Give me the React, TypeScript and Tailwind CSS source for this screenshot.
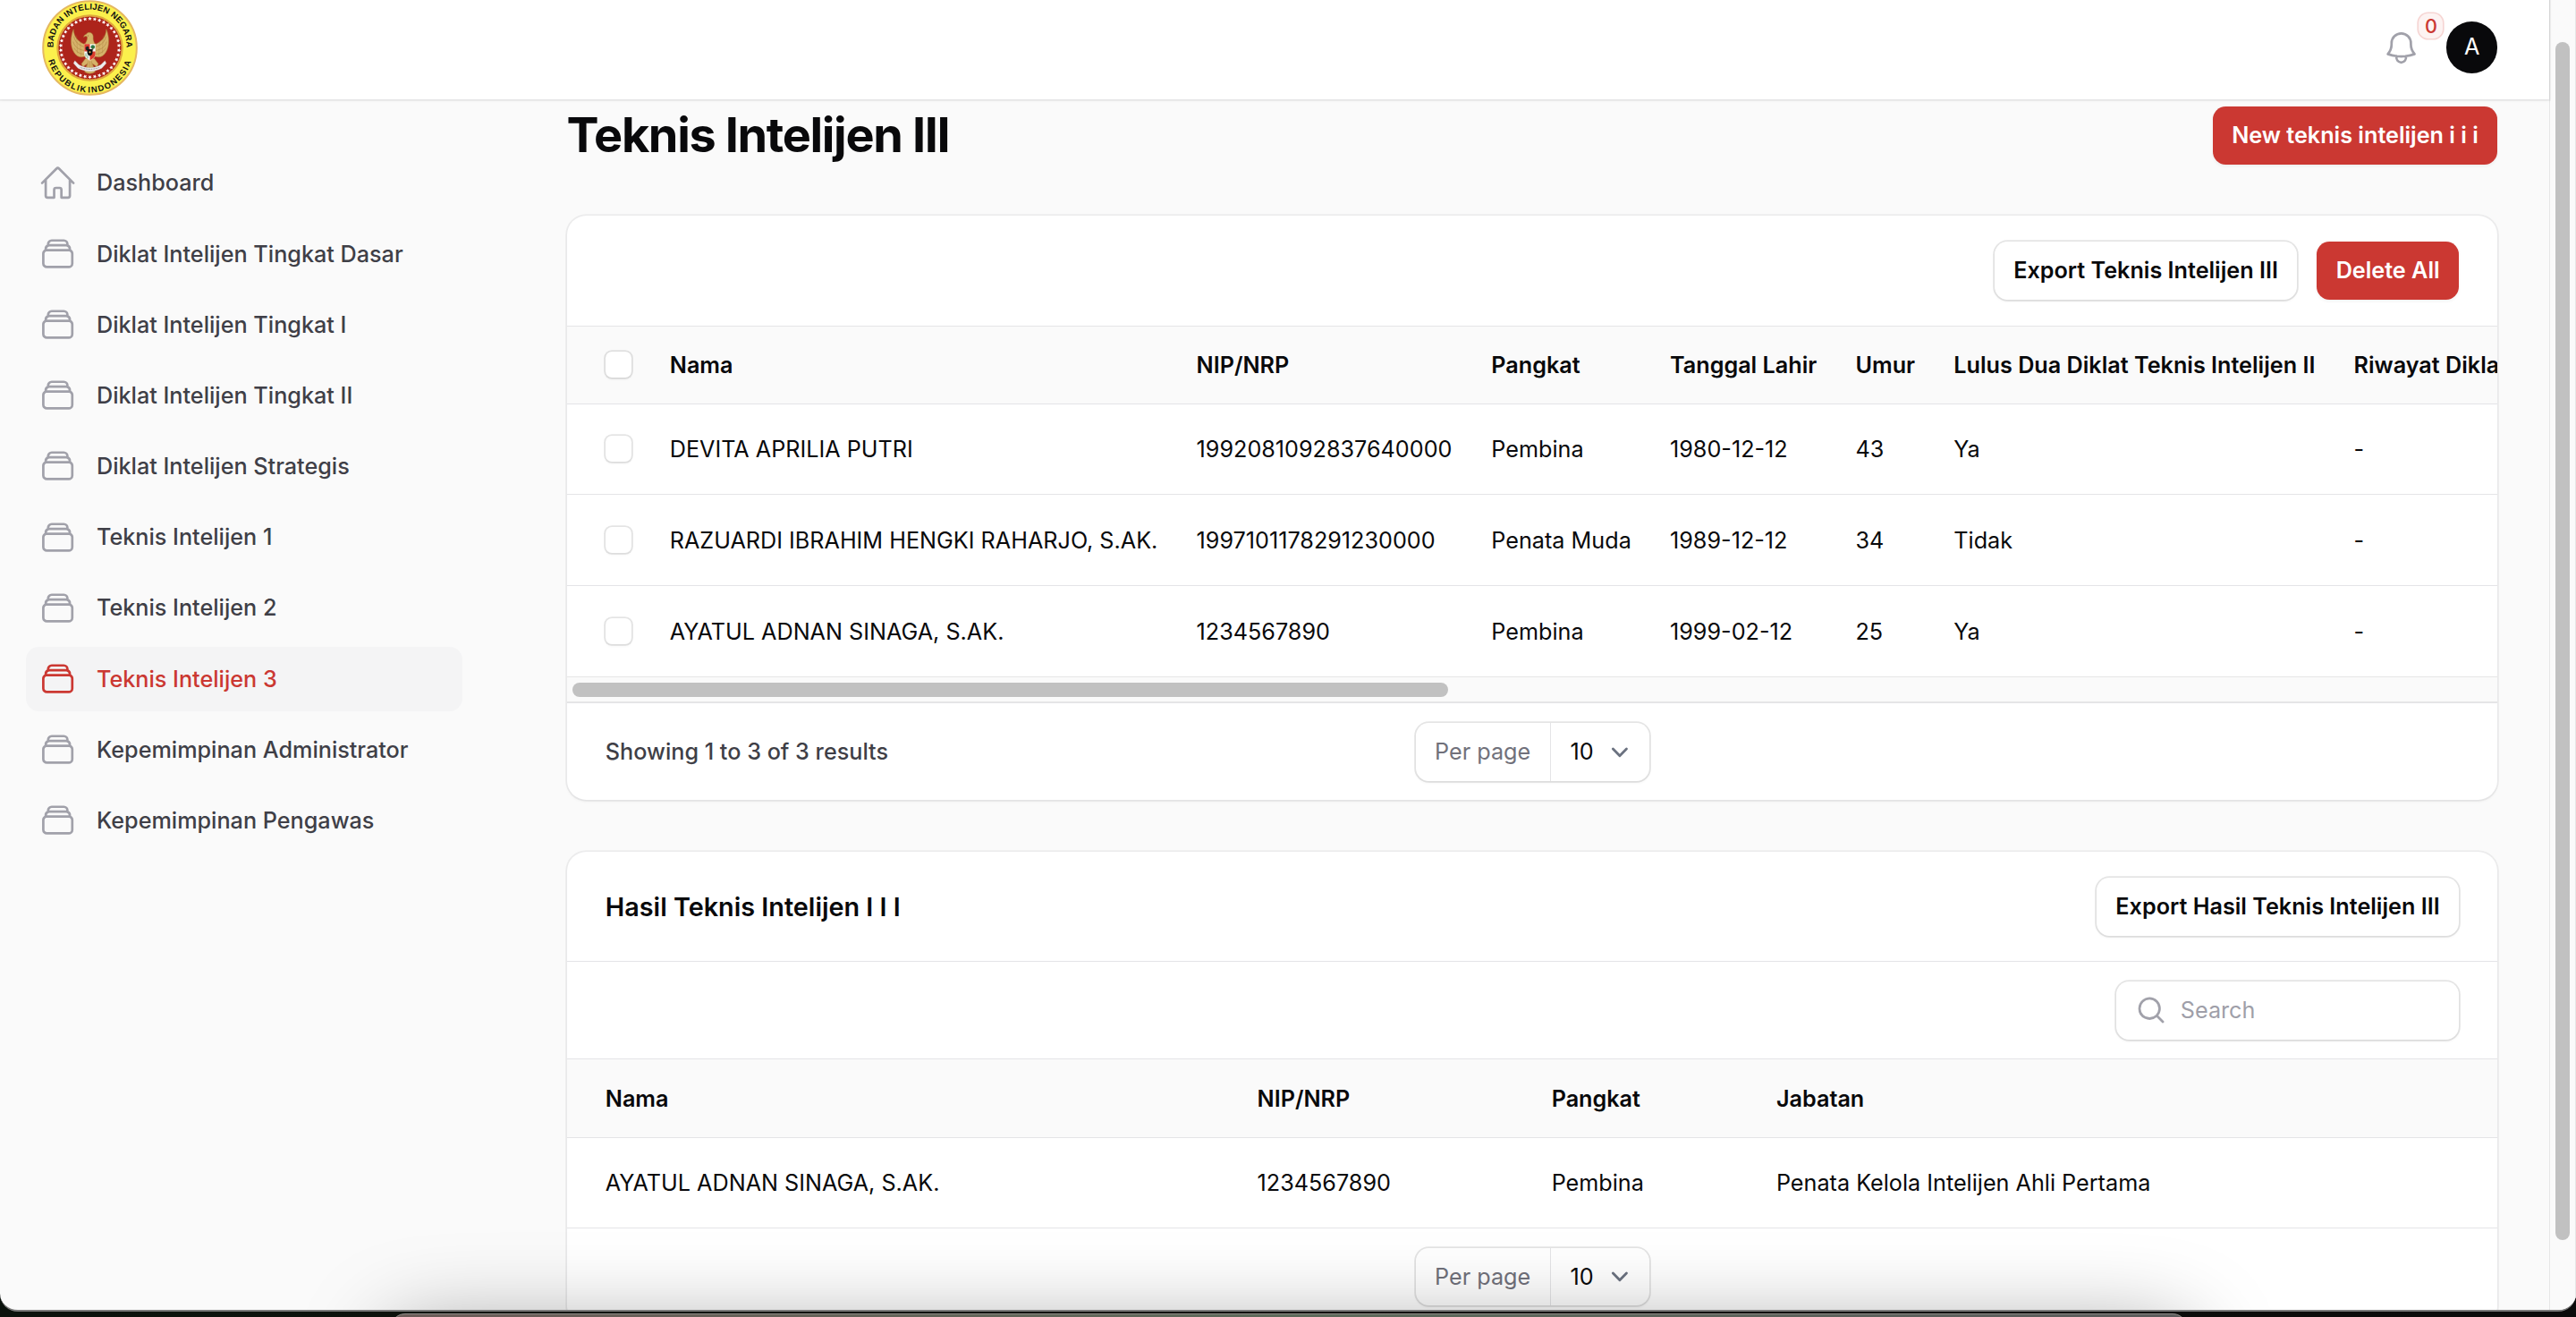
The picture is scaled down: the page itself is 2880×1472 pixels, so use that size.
import React from "react";

const RED = "#cb3832";

function ArchiveIcon({ active }: { active?: boolean }) {
  return (
    <svg viewBox="0 0 24 24" fill="none" stroke={active ? RED : "#a1a1aa"} strokeWidth="1.5" strokeLinecap="round" strokeLinejoin="round" className="h-6 w-6 shrink-0">
      <path d="M6 6.878V6a2.25 2.25 0 0 1 2.25-2.25h7.5A2.25 2.25 0 0 1 18 6v.878m-12 0c.235-.083.487-.128.75-.128h10.5c.263 0 .515.045.75.128m-12 0A2.25 2.25 0 0 0 4.5 9v.878m13.5-3A2.25 2.25 0 0 1 19.5 9v.878m0 0a2.246 2.246 0 0 0-.75-.128H5.25c-.263 0-.515.045-.75.128m15 0A2.25 2.25 0 0 1 21 12v6a2.25 2.25 0 0 1-2.25 2.25H5.25A2.25 2.25 0 0 1 3 18v-6c0-.98.626-1.813 1.5-2.122" />
    </svg>
  );
}

function HomeIcon() {
  return (
    <svg viewBox="0 0 24 24" fill="none" stroke="#a1a1aa" strokeWidth="1.5" strokeLinecap="round" strokeLinejoin="round" className="h-6 w-6 shrink-0">
      <path d="m2.25 12 8.954-8.955c.44-.439 1.152-.439 1.591 0L21.75 12M4.5 9.75v10.125c0 .621.504 1.125 1.125 1.125H9.75v-4.875c0-.621.504-1.125 1.125-1.125h2.25c.621 0 1.125.504 1.125 1.125V21h4.125c.621 0 1.125-.504 1.125-1.125V9.75" />
    </svg>
  );
}

function BellIcon() {
  return (
    <svg viewBox="0 0 24 24" fill="none" stroke="#a1a1aa" strokeWidth="1.5" strokeLinecap="round" strokeLinejoin="round" className="h-6 w-6">
      <path d="M14.857 17.082a23.848 23.848 0 0 0 5.454-1.31A8.967 8.967 0 0 1 18 9.75V9A6 6 0 0 0 6 9v.75a8.967 8.967 0 0 1-2.312 6.022c1.733.64 3.56 1.085 5.455 1.31m5.714 0a24.255 24.255 0 0 1-5.714 0m5.714 0a3 3 0 1 1-5.714 0" />
    </svg>
  );
}

const STARS = Array.from({ length: 38 }, (_, i) => (i * 360) / 38);

function Emblem() {
  return (
    <svg viewBox="0 0 108 108" className="h-[107px] w-[107px] [zoom:0.5555556]">
      <defs>
        <path id="arcTop" d="M 13 56 A 41.2 41.2 0 1 1 95 56" />
        <path id="arcBottom" d="M 5.6 56 A 48.4 48.4 0 0 0 102.4 56" />
      </defs>
      <circle cx="54" cy="54" r="52.8" fill="#fbf04c" stroke="#e5b860" strokeWidth="2" />
      <circle cx="54" cy="54" r="36.5" fill="#ad241b" stroke="#e0a83c" strokeWidth="2.2" />
      <g fontFamily="'Liberation Sans', sans-serif" fontWeight="700" fontSize="9.6" fill="#111">
        <text textAnchor="middle" letterSpacing="0.1">
          <textPath href="#arcTop" startOffset="50%">BADAN INTELIJEN NEGARA</textPath>
        </text>
        <text textAnchor="middle" letterSpacing="1.4" wordSpacing="-3">
          <textPath href="#arcBottom" startOffset="50%">REPUBLIK INDONESIA</textPath>
        </text>
      </g>
      <g fill="#fff">
        {STARS.map((a) => (
          <path key={a} transform={`rotate(${a} 54 54)`} d="M54 18.9l.65 1.35 1.5.2-1.08 1.05.27 1.5-1.34-.7-1.34.7.27-1.5-1.08-1.05 1.5-.2z" />
        ))}
      </g>
      <g fill="#d6b26a" stroke="#a67c35" strokeWidth=".5" strokeLinejoin="round">
        <path d="M48 50C41 47 36 42 35.5 33c-3.5 8-4 19 .5 26 3 5 8 7 13 4z" />
        <path d="M60 50c7-3 12-8 12.5-17 3.5 8 4 19-.5 26-3 5-8 7-13 4z" />
        <path d="M49 66l-4.5 6 1.5 3.5 5-3.5-3 9 3 1.5 3 .5 3-.5 3-1.5-3-9 5 3.5 1.5-3.5L59 66z" />
        <path d="M48.5 50c1-3 2.5-4 2.5-7.5 0-1-.5-1.5-2.5-1.5l-1.5 1c0-2 1.5-3.2 3-3.5 1-2 4-2.5 6-1 2.5 2 1.5 5 1.8 7 .2 2.5 1.5 3.5 1.7 5.5z" />
      </g>
      <g stroke="#a67c35" strokeWidth=".5" fill="none">
        <path d="M36 41c1 6 5 10 12 12M35 47c2 6 6 9 13 10M36 54c3 5 7 7 12 7M72 41c-1 6-5 10-12 12M73 47c-2 6-6 9-13 10M72 54c-3 5-7 7-12 7" />
        <path d="M39 40l1 20M43 46l1 17M69 40l-1 20M65 46l-1 17" strokeWidth=".3" />
        <path d="M52 69l-1 11M54 69v12M56 69l1 11" />
      </g>
      <circle cx="51.8" cy="40.3" r=".5" fill="#5c4020" />
      <path d="M37 68.5l4.5 4.5c8 4.5 17 4.5 25 0l4.5-4.5 1.5 3-5 5.5c-9 4.5-18 4.5-27 0l-5-5.5z" fill="#eee" stroke="#aaa" strokeWidth=".3" />
      <path d="M43 76c7 2.8 15 2.8 22 0" stroke="#777" strokeWidth=".8" strokeDasharray="1 .6" fill="none" />
      <path d="M47.5 49.5h13v11c0 4-3 6-6.5 8-3.5-2-6.5-4-6.5-8z" fill="#fff" stroke="#d3aa5c" strokeWidth=".6" />
      <path d="M47.8 49.8h6.2v8.2h-6.2zM54 58h6.2v2.5c0 4-2.8 5.5-6.2 7.5z" fill="#dc3b2c" />
      <circle cx="57.3" cy="53" r="2.3" fill="#2c7a45" />
      <path d="M56.9 54h.8v3h-.8z" fill="#5c4020" />
      <path d="M49 54l1.5-1.8 2 .4.5 2.4-2 2-1.5-.8z" fill="#222" />
      <path d="M51 55.5h6v4c0 2-1.5 2.8-3 3.7-1.5-.9-3-1.7-3-3.7z" fill="#111" />
      <circle cx="54" cy="58.8" r="1" fill="#e5c158" />
      <path d="M49.5 60v4M51.5 62v4" stroke="#2c7a45" strokeWidth=".7" />
    </svg>
  );
}

const NAV = [
  "Dashboard",
  "Diklat Intelijen Tingkat Dasar",
  "Diklat Intelijen Tingkat I",
  "Diklat Intelijen Tingkat II",
  "Diklat Intelijen Strategis",
  "Teknis Intelijen 1",
  "Teknis Intelijen 2",
  "Teknis Intelijen 3",
  "Kepemimpinan Administrator",
  "Kepemimpinan Pengawas",
];

const COLUMNS = ["Nama", "NIP/NRP", "Pangkat", "Tanggal Lahir", "Umur", "Lulus Dua Diklat Teknis Intelijen II", "Riwayat Diklat"];

const ROWS = [
  ["DEVITA APRILIA PUTRI", "1992081092837640000", "Pembina", "1980-12-12", "43", "Ya", "-"],
  ["RAZUARDI IBRAHIM HENGKI RAHARJO, S.AK.", "1997101178291230000", "Penata Muda", "1989-12-12", "34", "Tidak", "-"],
  ["AYATUL ADNAN SINAGA, S.AK.", "1234567890", "Pembina", "1999-02-12", "25", "Ya", "-"],
];

function Checkbox() {
  return <span className="block h-4 w-4 rounded bg-white shadow-[0_1px_2px_rgba(0,0,0,0.05)] ring-1 ring-zinc-950/10" />;
}

function OutlineButton({ children }: { children: React.ReactNode }) {
  return (
    <button className="h-9 rounded-lg bg-white px-3 text-sm font-semibold whitespace-nowrap text-zinc-950 shadow-[0_1px_2px_rgba(0,0,0,0.05)] ring-1 ring-zinc-950/10">
      {children}
    </button>
  );
}

function RedButton({ children }: { children: React.ReactNode }) {
  return (
    <button className="h-9 rounded-lg bg-[#cb3832] px-3 text-sm font-semibold whitespace-nowrap text-white shadow-[0_1px_2px_rgba(0,0,0,0.05)]">
      {children}
    </button>
  );
}

function PerPage() {
  return (
    <div className="flex h-9 w-[145px] items-center rounded-lg bg-white text-sm shadow-[0_1px_2px_rgba(0,0,0,0.05)] ring-1 ring-zinc-950/10">
      <span className="flex h-full items-center border-r border-zinc-200 px-3 text-zinc-500">Per page</span>
      <span className="flex flex-1 items-center justify-between pr-[7.5px] pl-3 text-zinc-950">
        10
        <svg viewBox="0 0 20 20" fill="none" stroke="#6b7280" strokeWidth="1.5" strokeLinecap="round" strokeLinejoin="round" className="h-[21px] w-[21px]">
          <path d="m6 8 4 4 4-4" />
        </svg>
      </span>
    </div>
  );
}

export default function App() {
  return (
    <div className="relative h-[1472px] w-[2880px] overflow-hidden bg-[#0c110c] bg-linear-to-r from-[#0b130d] via-[#11100a] to-[#0b0b0b] font-['Inter',sans-serif]">
      <div className="h-[1466px] overflow-hidden rounded-b-[20px] border-b-2 border-[#7a7a7a] bg-[#fafafa]">
        <div className="flex h-[814px] [zoom:1.8]">
          <div className="flex min-w-0 flex-1 flex-col">
            <header className="relative z-10 -mt-[2.4px] flex h-16 shrink-0 items-center bg-white pr-8 pl-[26px] shadow-[0_1px_2px_rgba(0,0,0,0.05)] ring-1 ring-zinc-950/5">
              <Emblem />
              <div className="ml-auto flex items-center gap-4">
                <div className="relative">
                  <BellIcon />
                  <span className="absolute -top-[9.5px] left-[22.6px] flex h-4 w-[15.5px] items-center justify-center rounded-md bg-[#fdf3f2] text-xs font-medium tracking-tighter text-[#cb3832] ring-[0.9px] ring-[#f6d5d3]">
                    0
                  </span>
                </div>
                <div className="flex h-8 w-8 items-center justify-center rounded-full bg-[#09090b] text-[14px] text-white">A</div>
              </div>
            </header>

            <div className="flex min-h-0 flex-1">
              <nav className="flex w-80 shrink-0 flex-col gap-1 px-4 py-8">
                {NAV.map((label, i) => {
                  const active = label === "Teknis Intelijen 3";
                  return (
                    <a
                      key={label}
                      className={
                        active
                          ? "flex w-[271.33px] items-center gap-3 rounded-lg bg-zinc-100 p-2 text-sm font-medium text-[#cb3832]"
                          : "flex w-[271.33px] items-center gap-3 rounded-lg p-2 text-sm font-medium text-zinc-700"
                      }
                    >
                      {i === 0 ? <HomeIcon /> : <ArchiveIcon active={active} />}
                      {label}
                    </a>
                  );
                })}
              </nav>

              <main className="flex min-w-0 flex-1 flex-col gap-8 px-8 pt-[4.44px]">
                <div className="flex items-center justify-between">
                  <h1 className="text-3xl font-bold tracking-tight text-zinc-950">Teknis Intelijen III</h1>
                  <RedButton>New teknis intelijen i i i</RedButton>
                </div>

                <section className="shrink-0 overflow-hidden rounded-xl bg-white shadow-[0_1px_2px_rgba(0,0,0,0.05)] ring-1 ring-zinc-950/5">
                  <div className="flex items-center justify-end gap-3 px-6 py-4">
                    <OutlineButton>Export Teknis Intelijen III</OutlineButton>
                    <RedButton>Delete All</RedButton>
                  </div>
                  <div className="overflow-hidden border-t border-zinc-200">
                    <table className="w-[2610px] text-left text-sm whitespace-nowrap text-zinc-950">
                      <thead>
                        <tr className="h-12 border-b border-zinc-200 bg-zinc-50">
                          <th className="w-px pr-3 pl-6">
                            <Checkbox />
                          </th>
                          {COLUMNS.map((c, i) => (
                            <th key={c} className={i === COLUMNS.length - 1 ? "px-3 font-semibold" : "w-px px-3 font-semibold"}>
                              {c}
                            </th>
                          ))}
                        </tr>
                      </thead>
                      <tbody className="divide-y divide-zinc-200">
                        {ROWS.map((row) => (
                          <tr key={row[0]} className="h-[56.5px]">
                            <td className="w-px pr-3 pl-6">
                              <Checkbox />
                            </td>
                            {row.map((cell, i) => (
                              <td key={i} className={i === 1 ? "pr-[12.4px] pl-3" : "px-3"}>
                                {cell}
                              </td>
                            ))}
                          </tr>
                        ))}
                      </tbody>
                    </table>
                  </div>
                  <div className="flex h-[16.3px] items-center border-y border-[#e6e6e6] bg-[#fafafa] pl-[3.5px]">
                    <div className="h-[8.9px] w-[544px] rounded-full bg-[#c1c1c1]" />
                  </div>
                  <div className="grid grid-cols-[1fr_auto_1fr] items-center border-t border-zinc-200 px-6 py-3">
                    <span className="text-sm font-medium text-zinc-700">Showing 1 to 3 of 3 results</span>
                    <PerPage />
                  </div>
                </section>

                <section className="shrink-0 overflow-hidden rounded-xl bg-white shadow-[0_1px_2px_rgba(0,0,0,0.05)] ring-1 ring-zinc-950/5">
                  <div className="flex items-center justify-between px-6 py-4">
                    <h2 className="text-base font-semibold text-zinc-950">Hasil Teknis Intelijen I I I</h2>
                    <OutlineButton>Export Hasil Teknis Intelijen III</OutlineButton>
                  </div>
                  <div className="flex justify-end border-t border-zinc-200 px-6 py-3">
                    <div className="flex h-9 w-[213px] items-center gap-2 rounded-lg bg-white pl-3 text-sm text-zinc-400 shadow-[0_1px_2px_rgba(0,0,0,0.05)] ring-1 ring-zinc-950/10">
                      <svg viewBox="0 0 20 20" fill="#a1a1aa" className="h-5 w-5">
                        <path fillRule="evenodd" clipRule="evenodd" d="M9 3.5a5.5 5.5 0 1 0 0 11 5.5 5.5 0 0 0 0-11ZM2 9a7 7 0 1 1 12.452 4.391l3.328 3.329a.75.75 0 1 1-1.06 1.06l-3.329-3.328A7 7 0 0 1 2 9Z" />
                      </svg>
                      Search
                    </div>
                  </div>
                  <table className="w-full table-fixed border-t border-zinc-200 text-left text-sm text-zinc-950">
                    <thead>
                      <tr className="h-[48.5px] border-b border-zinc-200 bg-zinc-50">
                        <th className="w-[416.9px] pr-3 pl-6 font-semibold">Nama</th>
                        <th className="w-[182.8px] px-3 font-semibold">NIP/NRP</th>
                        <th className="w-[139.6px] px-3 font-semibold">Pangkat</th>
                        <th className="px-3 font-semibold">Jabatan</th>
                      </tr>
                    </thead>
                    <tbody>
                      <tr className="h-14">
                        <td className="pr-3 pl-6">AYATUL ADNAN SINAGA, S.AK.</td>
                        <td className="px-3">1234567890</td>
                        <td className="px-3">Pembina</td>
                        <td className="px-3">Penata Kelola Intelijen Ahli Pertama</td>
                      </tr>
                    </tbody>
                  </table>
                  <div className="flex justify-center border-t border-zinc-200 px-6 py-3">
                    <PerPage />
                  </div>
                </section>
              </main>
            </div>
          </div>

          <div className="flex w-[16.67px] shrink-0 justify-center border-x border-[#e6e6e6] bg-[#fafafa] pt-[26px]">
            <div className="h-[744px] w-[8.9px] rounded-full bg-[#c1c1c1]" />
          </div>
        </div>
      </div>

      <div className="absolute top-0 left-0 h-[1464px] w-full overflow-hidden rounded-b-[20px]">
        <div className="absolute top-[1468px] left-[437px] h-[400px] w-[2008px] rounded-[24px] shadow-[0_20px_100px_rgba(0,0,0,0.4)]" />
      </div>
      <div className="absolute top-[1468px] left-[437px] h-10 w-[2008px] rounded-t-[16px] border-t border-[#8d8a86] bg-linear-to-r from-[#6b5c58] via-[#5d6a5a] to-[#5c5c5c]" />
    </div>
  );
}
